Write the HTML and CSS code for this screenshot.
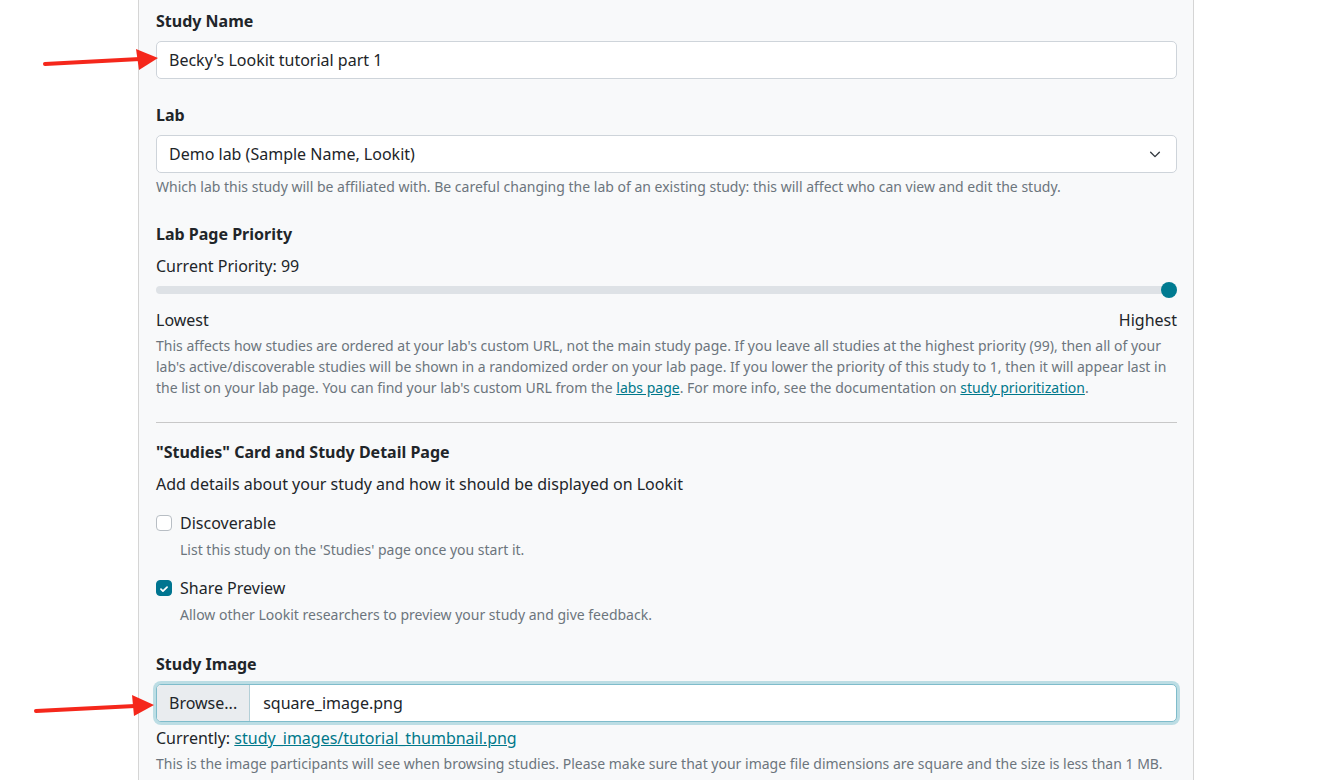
FILE: index.html
```html
<!DOCTYPE html>
<html>
<head>
<meta charset="utf-8">
<link rel="stylesheet" href="styles.css">
</head>
<body>
<div class="panel">
  <div class="group">
    <label class="label">Study Name</label>
    <div class="input">Becky's Lookit tutorial part 1</div>
  </div>
  <div class="group lab">
    <label class="label">Lab</label>
    <div class="input select">
      <span>Demo lab (Sample Name, Lookit)</span>
      <svg class="chev" width="14" height="14" viewBox="0 0 16 16"><path d="M3 6l5 5 5-5" fill="none" stroke="#343a40" stroke-width="1.6" stroke-linecap="round" stroke-linejoin="round"/></svg>
    </div>
    <div class="help">Which lab this study will be affiliated with. Be careful changing the lab of an existing study: this will affect who can view and edit the study.</div>
  </div>
  <div class="group">
    <label class="label">Lab Page Priority</label>
    <div class="text">Current Priority: 99</div>
    <div class="slider"><div class="track"></div><div class="thumb"></div></div>
    <div class="ends"><span>Lowest</span><span>Highest</span></div>
    <div class="help">This affects how studies are ordered at your lab's custom URL, not the main study page. If you leave all studies at the highest priority (99), then all of your lab's active/discoverable studies will be shown in a randomized order on your lab page. If you lower the priority of this study to 1, then it will appear last in the list on your lab page. You can find your lab's custom URL from the <a href="#">labs page</a>. For more info, see the documentation on <a href="#">study prioritization</a>.</div>
  </div>
  <hr class="rule">
  <div class="section">
    <div class="label">"Studies" Card and Study Detail Page</div>
    <div class="text">Add details about your study and how it should be displayed on Lookit</div>
  </div>
  <div class="check">
    <div class="row"><span class="box"></span><span>Discoverable</span></div>
    <div class="help indent">List this study on the 'Studies' page once you start it.</div>
  </div>
  <div class="check">
    <div class="row"><span class="box on"><svg width="16" height="16" viewBox="0 0 16 16"><path d="M4.5 8.2l2.3 2.3 4.7-4.7" fill="none" stroke="#fff" stroke-width="2" stroke-linecap="round" stroke-linejoin="round"/></svg></span><span>Share Preview</span></div>
    <div class="help indent">Allow other Lookit researchers to preview your study and give feedback.</div>
  </div>
  <div class="group image">
    <label class="label">Study Image</label>
    <div class="file"><span class="browse">Browse...</span><span class="fname">square_image.png</span></div>
    <div class="text current">Currently: <a href="#">study_images/tutorial_thumbnail.png</a></div>
    <div class="help">This is the image participants will see when browsing studies. Please make sure that your image file dimensions are square and the size is less than 1 MB.</div>
  </div>
</div>
<svg class="arrow a1" width="170" height="30" viewBox="0 0 170 30"><line x1="45" y1="15" x2="140" y2="10" stroke="#f5271b" stroke-width="4" stroke-linecap="round"/><polygon points="158,9 136,0 139,21" fill="#f5271b"/></svg>
<svg class="arrow a2" width="170" height="30" viewBox="0 0 170 30"><line x1="36" y1="17" x2="135" y2="12" stroke="#f5271b" stroke-width="4" stroke-linecap="round"/><polygon points="154,11 132,1 134,22" fill="#f5271b"/></svg>
</body>
</html>
```
FILE: styles.css
```css
html, body { margin: 0; padding: 0; background: #fff; }
body {
  font-family: "Noto Sans", "Open Sans", sans-serif;
  font-size: 16px;
  line-height: 24px;
  color: #212529;
  position: relative;
  height: 780px;
  overflow: hidden;
}
.panel {
  margin-left: 138px;
  width: 1056px;
  box-sizing: border-box;
  background: #f8f9fa;
  border-left: 1px solid #d5d5d5;
  border-right: 1px solid #d5d5d5;
  padding: 9px 16px 40px 17px;
  min-height: 780px;
}
.group { margin-bottom: 24px; }
.group.lab { margin-bottom: 25px; }
.label { display: block; font-weight: 700; margin-bottom: 8px; }
.input {
  height: 38px;
  box-sizing: border-box;
  border: 1px solid #ced4da;
  border-radius: 5px;
  background: #fff;
  padding: 6px 12px;
}
.select { display: flex; justify-content: space-between; align-items: center; padding-right: 14px; }
.help { font-size: 14px; line-height: 21px; color: #6c757d; margin-top: 3px; }
.help a, .text a { color: #00788a; text-decoration: underline; }
.slider { position: relative; height: 24px; display: flex; align-items: center; }
.track { flex: 1; height: 8px; border-radius: 4px; background: #dee2e6; }
.thumb {
  position: absolute; right: 0; top: 4px;
  width: 16px; height: 16px; border-radius: 50%; background: #007b91;
}
.ends { display: flex; justify-content: space-between; margin-top: 6px; }
.rule { border: 0; border-top: 1px solid #c8c8c8; margin: 0 0 17px; }
.section { margin-bottom: 15px; }
.section .label { margin-bottom: 8px; }
.check { margin-bottom: 16px; }
.row { display: flex; align-items: center; gap: 8px; }
.box {
  width: 16px; height: 16px; box-sizing: border-box;
  border: 1px solid #b8bec4; border-radius: 4px; background: #fff;
  display: flex;
}
.box.on { background: #007590; border-color: #007590; }
.indent { margin-left: 24px; margin-top: 4px; }
.image { margin-top: 27px; }
.file {
  display: flex; height: 38px; box-sizing: border-box;
  border: 1px solid #7fbccb; border-radius: 5px; background: #fff;
  box-shadow: 0 0 0 3px #bcdde4;
  overflow: hidden;
}
.browse {
  background: #e9ecef; border-right: 1px solid #b3cfd7;
  padding: 6px 12px; line-height: 24px;
}
.fname { padding: 6px 13px; line-height: 24px; }
.current { margin-top: 4px; }
.arrow { position: absolute; left: 0; }
.a1 { top: 49px; }
.a2 { top: 694px; }
```
